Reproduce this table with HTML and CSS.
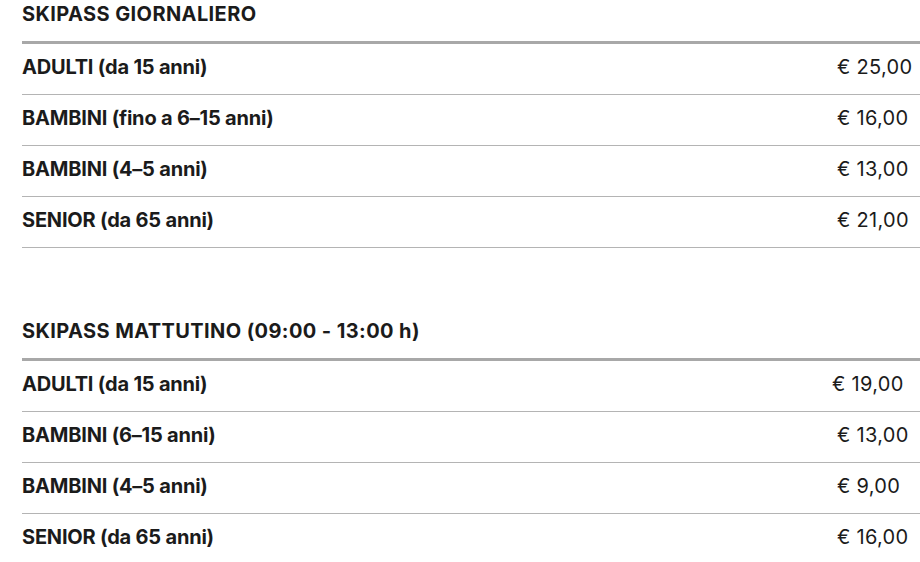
FILE: index.html
```html
<!DOCTYPE html>
<html lang="it">
<head>
<meta charset="utf-8">
<title>Skipass</title>
<link rel="stylesheet" href="styles.css">
</head>
<body>
<div class="page">
  <section class="block">
    <h2 class="title">SKIPASS GIORNALIERO</h2>
    <div class="row"><span class="label">ADULTI (da 15 anni)</span><span class="price">€ 25,00</span></div>
    <div class="row"><span class="label">BAMBINI (fino a 6–15 anni)</span><span class="price">€ 16,00</span></div>
    <div class="row"><span class="label">BAMBINI (4–5 anni)</span><span class="price">€ 13,00</span></div>
    <div class="row"><span class="label">SENIOR (da 65 anni)</span><span class="price">€ 21,00</span></div>
  </section>
  <section class="block second">
    <h2 class="title">SKIPASS MATTUTINO (09:00 - 13:00 h)</h2>
    <div class="row"><span class="label">ADULTI (da 15 anni)</span><span class="price shift">€ 19,00</span></div>
    <div class="row"><span class="label">BAMBINI (6–15 anni)</span><span class="price">€ 13,00</span></div>
    <div class="row"><span class="label">BAMBINI (4–5 anni)</span><span class="price">€ 9,00</span></div>
    <div class="row"><span class="label">SENIOR (da 65 anni)</span><span class="price">€ 16,00</span></div>
  </section>
</div>
</body>
</html>
```
FILE: styles.css
```css
html, body {
  margin: 0;
  padding: 0;
  background: #ffffff;
  overflow: hidden;
}
body {
  font-family: Inter, "Liberation Sans", sans-serif;
  color: #1b1b1b;
}
.page {
  padding-left: 22px;
}
.block {
  width: 898px;
}
.second {
  margin-top: 69px;
}
.title {
  margin: 0;
  font-size: 20px;
  font-weight: 700;
  line-height: 28px;
  letter-spacing: 0.4px;
  padding-bottom: 13px;
  border-bottom: 3px solid #a8a8a8;
}
.row {
  display: grid;
  grid-template-columns: 1fr 83px;
  align-items: center;
  height: 46px;
  padding-bottom: 4px;
  border-bottom: 1px solid #b4b4b4;
  font-size: 20px;
  line-height: 24px;
}
.label {
  font-weight: 700;
  letter-spacing: -0.2px;
}
.price {
  font-weight: 400;
  letter-spacing: 0.3px;
}
.shift {
  margin-left: -5px;
}
```
